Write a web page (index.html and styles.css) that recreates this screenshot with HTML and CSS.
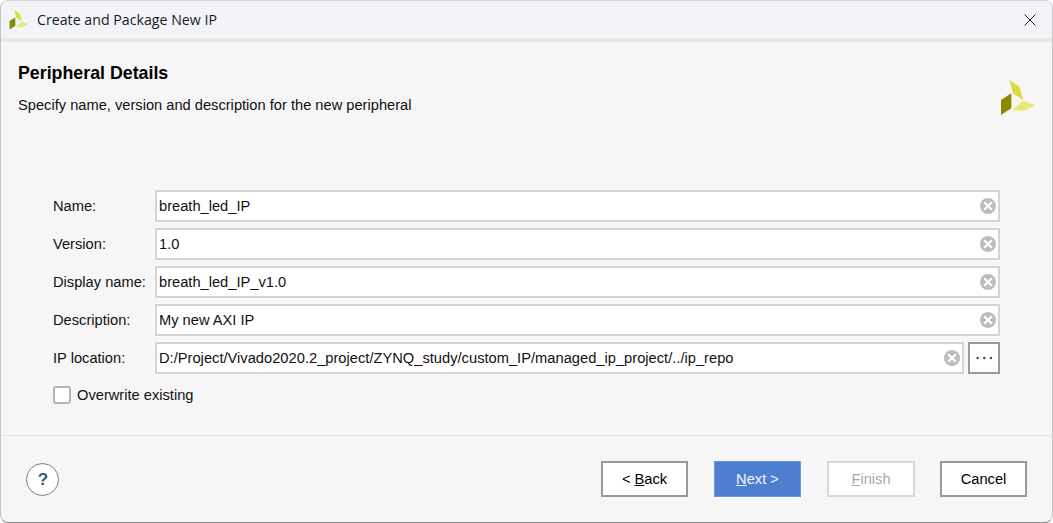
FILE: index.html
```html
<!DOCTYPE html>
<html>
<head>
	<title>Create and Package New IP</title>
	<link rel="stylesheet" href="styles.css">
</head>
<body>
	<div class="window">
		<!-- title bar -->
		<div class="titlebar">
			<svg class="title-logo" viewBox="0 0 36 36">
				<polygon points="1,20 11.3,13.3 11.3,28.3 1,35" fill="#8a8a00"/>
				<polygon points="9.3,0 19.3,6.7 23.3,20 13.3,14" fill="#d9de3a"/>
				<polygon points="12.3,30 23.3,20.7 35.3,25.3 23.3,31" fill="#e3e879"/>
			</svg>
			<span class="title-text">Create and Package New IP</span>
			<svg class="title-close" viewBox="0 0 12 12">
				<path d="M0.5 0.5L11.5 11.5M11.5 0.5L0.5 11.5" stroke="#222" stroke-width="1" fill="none"/>
			</svg>
		</div>

		<!-- page header -->
		<div class="header">
			<div>
				<h1 class="header-title">Peripheral Details</h1>
				<p class="header-desc">Specify name, version and description for the new peripheral</p>
			</div>
			<svg class="header-logo" viewBox="0 0 36 36">
				<polygon points="1,20 11.3,13.3 11.3,28.3 1,35" fill="#8a8a00"/>
				<polygon points="9.3,0 19.3,6.7 23.3,20 13.3,14" fill="#d9de3a"/>
				<polygon points="12.3,30 23.3,20.7 35.3,25.3 23.3,31" fill="#e3e879"/>
			</svg>
		</div>

		<!-- form -->
		<div class="form">
			<div class="row">
				<label class="label">Name:</label>
				<div class="field"><span class="value">breath_led_IP</span><span class="clear"><svg viewBox="0 0 16 16"><circle cx="8" cy="8" r="8" fill="#bdbdbd"/><path d="M4.2 4.2L11.8 11.8M11.8 4.2L4.2 11.8" stroke="#fff" stroke-width="2.2"/></svg></span></div>
			</div>
			<div class="row">
				<label class="label">Version:</label>
				<div class="field"><span class="value">1.0</span><span class="clear"><svg viewBox="0 0 16 16"><circle cx="8" cy="8" r="8" fill="#bdbdbd"/><path d="M4.2 4.2L11.8 11.8M11.8 4.2L4.2 11.8" stroke="#fff" stroke-width="2.2"/></svg></span></div>
			</div>
			<div class="row">
				<label class="label">Display name:</label>
				<div class="field"><span class="value">breath_led_IP_v1.0</span><span class="clear"><svg viewBox="0 0 16 16"><circle cx="8" cy="8" r="8" fill="#bdbdbd"/><path d="M4.2 4.2L11.8 11.8M11.8 4.2L4.2 11.8" stroke="#fff" stroke-width="2.2"/></svg></span></div>
			</div>
			<div class="row">
				<label class="label">Description:</label>
				<div class="field"><span class="value">My new AXI IP</span><span class="clear"><svg viewBox="0 0 16 16"><circle cx="8" cy="8" r="8" fill="#bdbdbd"/><path d="M4.2 4.2L11.8 11.8M11.8 4.2L4.2 11.8" stroke="#fff" stroke-width="2.2"/></svg></span></div>
			</div>
			<div class="row">
				<label class="label">IP location:</label>
				<div class="field"><span class="value value-path">D:/Project/Vivado2020.2_project/ZYNQ_study/custom_IP/managed_ip_project/../ip_repo</span><span class="clear"><svg viewBox="0 0 16 16"><circle cx="8" cy="8" r="8" fill="#bdbdbd"/><path d="M4.2 4.2L11.8 11.8M11.8 4.2L4.2 11.8" stroke="#fff" stroke-width="2.2"/></svg></span></div>
				<button class="browse" type="button"><svg viewBox="0 0 16 4"><circle cx="1.7" cy="2" r="1.2" fill="#444"/><circle cx="8.3" cy="2" r="1.2" fill="#444"/><circle cx="15" cy="2" r="1.2" fill="#444"/></svg></button>
			</div>
			<div class="check-row">
				<span class="checkbox"></span>
				<span>Overwrite existing</span>
			</div>
		</div>

		<!-- footer -->
		<div class="footer">
			<button class="help" type="button">?</button>
			<div class="buttons">
				<button class="btn" type="button">&lt; <u>B</u>ack</button>
				<button class="btn btn-primary" type="button"><u>N</u>ext &gt;</button>
				<button class="btn btn-disabled" type="button"><u>F</u>inish</button>
				<button class="btn btn-cancel" type="button">Cancel</button>
			</div>
		</div>
	</div>
</body>
</html>
```
FILE: styles.css
```css
* {
	margin: 0;
	padding: 0;
	box-sizing: border-box;
}
body {
	background: #fff;
	font-family: "Liberation Sans", Arial, sans-serif;
	font-size: 14.67px;
	color: #111;
	overflow: hidden;
}
.window {
	width: 1053px;
	height: 523px;
	display: flex;
	flex-direction: column;
	background: #f6f6f6;
	border: 1px solid #c4c4c4;
	border-bottom-color: #8a8a8a;
	border-top-color: #d6d6d6;
	border-radius: 8px;
	overflow: hidden;
}

/* title bar */
.titlebar {
	height: 41px;
	flex: none;
	display: flex;
	align-items: center;
	background: #f2f4fa;
	border-bottom: 4px solid #e7e7e7;
	padding-left: 8px;
}
.title-logo {
	width: 20px;
	height: 20px;
	margin-right: 8px;
}
.title-text {
	font-family: "Open Sans", sans-serif;
	font-size: 14.2px;
	color: #1a1a1a;
}
.title-close {
	width: 12px;
	height: 12px;
	margin-left: auto;
	margin-right: 16px;
}

/* header */
.header {
	height: 148px;
	flex: none;
	display: flex;
	justify-content: space-between;
	padding: 21px 16px 0 17px;
}
.header-title {
	font-size: 17.8px;
	line-height: 20px;
	font-weight: bold;
	color: #000;
}
.header-desc {
	margin-top: 14px;
	line-height: 16px;
}
.header-logo {
	width: 36px;
	height: 36px;
	margin-top: 17px;
}

/* form */
.form {
	flex: 1;
	padding: 0 52px;
	display: flex;
	flex-direction: column;
	gap: 6px;
}
.row {
	display: flex;
	align-items: center;
	height: 32px;
}
.label {
	width: 102px;
	flex: none;
}
.field {
	flex: 1;
	height: 32px;
	display: flex;
	align-items: center;
	justify-content: space-between;
	background: #fff;
	border: 2px solid #d4d4d4;
	padding: 0 2px 0 2px;
	outline: 1px solid #fafafa;
}
.value {
	white-space: nowrap;
}
.value-path {
	font-size: 14.7px;
}
.clear {
	width: 16px;
	height: 16px;
	display: flex;
}
.browse {
	width: 32px;
	height: 32px;
	flex: none;
	margin-left: 4px;
	background: #fff;
	border: 2px solid #999;
	display: flex;
	align-items: center;
	justify-content: center;
}
.browse svg {
	width: 16px;
	height: 4px;
}
.check-row {
	display: flex;
	align-items: center;
	gap: 6px;
	height: 18px;
	margin-top: 6px;
}
.checkbox {
	width: 18px;
	height: 18px;
	background: #fff;
	border: 2px solid #b4b4b4;
	border-radius: 3px;
}

/* footer */
.footer {
	height: 87px;
	flex: none;
	border-top: 1px solid #e2e2e2;
	display: flex;
	align-items: flex-start;
	justify-content: space-between;
	padding: 25px 25px 0 25px;
}
.help {
	width: 33px;
	height: 33px;
	margin-top: 2px;
	padding-left: 1px;
	border-radius: 50%;
	background: #fff;
	border: 1px solid #7d7d7d;
	font-family: "Liberation Sans", Arial, sans-serif;
	font-size: 17px;
	font-weight: bold;
	color: #3d5288;
}
.buttons {
	display: flex;
}
.btn {
	width: 87px;
	height: 36px;
	margin-left: 26px;
	background: #fff;
	border: 2px solid #999;
	font-family: "Liberation Sans", Arial, sans-serif;
	font-size: 14.67px;
	color: #000;
}
.btn-primary {
	background: #4f7dd0;
	border: 1px solid #6f95dc;
	color: #f2f6ff;
}
.btn-disabled {
	width: 88px;
	border-color: #d8d8d8;
	color: #a8a8a8;
}
.btn-cancel {
	margin-left: 25px;
}
```
